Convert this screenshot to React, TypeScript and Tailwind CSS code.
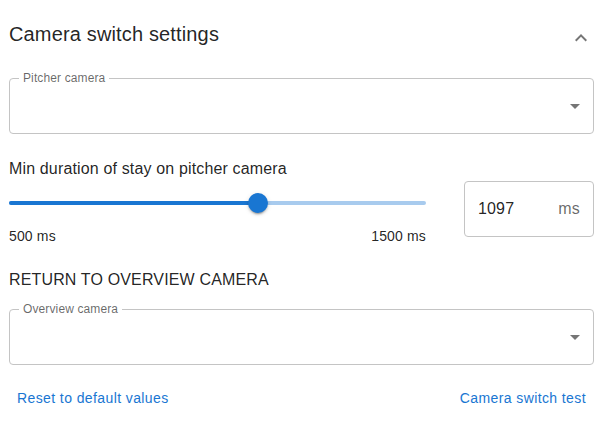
import React from "react";

function ArrowDrop() {
  return (
    <svg viewBox="0 0 24 24" width="24" height="24" className="absolute right-[6px] top-1/2 -translate-y-1/2" fill="rgba(0,0,0,0.54)">
      <path d="M7 10l5 5 5-5z" />
    </svg>
  );
}

function SelectField({ label }: { label: string }) {
  return (
    <div className="relative h-[56px] rounded-[4px] border border-[#c4c4c4]">
      <span className="absolute left-[9px] top-[-8px] bg-white px-[4px] text-[12px] leading-[14px] tracking-[0.12px] text-[rgba(0,0,0,0.6)]">
        {label}
      </span>
      <ArrowDrop />
    </div>
  );
}

export default function App() {
  const min = 500;
  const max = 1500;
  const value = 1097;
  const pct = ((value - min) / (max - min)) * 100;
  return (
    <div
      className="w-[606px] h-[425px] bg-white pl-[9px] pr-[12px] text-[rgba(0,0,0,0.87)]"
      style={{ fontFamily: "'Liberation Sans', Arial, sans-serif" }}
    >
      <div className="flex items-start justify-between pt-[18px]">
        <div className="text-[20px] leading-[32px] tracking-[0.15px]">Camera switch settings</div>
        <svg viewBox="0 0 24 24" width="24" height="24" className="mt-[8px] mr-[1px]" fill="rgba(0,0,0,0.54)">
          <path d="M12 8l-6 6 1.41 1.41L12 10.83l4.59 4.58L18 14z" />
        </svg>
      </div>

      <div className="mt-[28px]">
        <SelectField label="Pitcher camera" />
      </div>

      <div className="mt-[23px] text-[16px] leading-[24px] tracking-[0.15px]">Min duration of stay on pitcher camera</div>

      <div className="flex items-start gap-[38px]">
        <div className="w-[417px]">
          <div className="relative h-[44px]">
            <div className="absolute left-0 right-0 top-1/2 h-[4px] -translate-y-1/2 rounded-full bg-[#1976d2] opacity-[0.38]" />
            <div
              className="absolute left-0 top-1/2 h-[4px] -translate-y-1/2 rounded-full bg-[#1976d2]"
              style={{ width: `${pct}%` }}
            />
            <div
              className="absolute top-1/2 h-[20px] w-[20px] -translate-x-1/2 -translate-y-1/2 rounded-full bg-[#1976d2] shadow-[0_3px_1px_-2px_rgba(0,0,0,0.2),0_2px_2px_0_rgba(0,0,0,0.14),0_1px_5px_0_rgba(0,0,0,0.12)]"
              style={{ left: `${pct}%` }}
            />
          </div>
          <div className="mt-[1px] flex justify-between text-[14px] leading-[20px] tracking-[0.15px]">
            <span>500 ms</span>
            <span>1500 ms</span>
          </div>
        </div>
        <div className="flex h-[56px] w-[130px] items-center justify-between rounded-[4px] border border-[#c4c4c4] pl-[13px] pr-[13px] tracking-[0.15px]">
          <span className="text-[16px]">1097</span>
          <span className="text-[16px] text-[rgba(0,0,0,0.6)]">ms</span>
        </div>
      </div>

      <div className="mt-[22px] text-[16px] leading-[24px] tracking-[0.15px]">RETURN TO OVERVIEW CAMERA</div>

      <div className="mt-[17px]">
        <SelectField label="Overview camera" />
      </div>

      <div className="mt-[15px] flex justify-between">
        <button className="h-[36px] px-[8px] text-[14px] font-normal tracking-[0.4px] text-[#1976d2]">Reset to default values</button>
        <button className="h-[36px] px-[8px] text-[14px] font-normal tracking-[0.4px] text-[#1976d2]">Camera switch test</button>
      </div>
    </div>
  );
}
